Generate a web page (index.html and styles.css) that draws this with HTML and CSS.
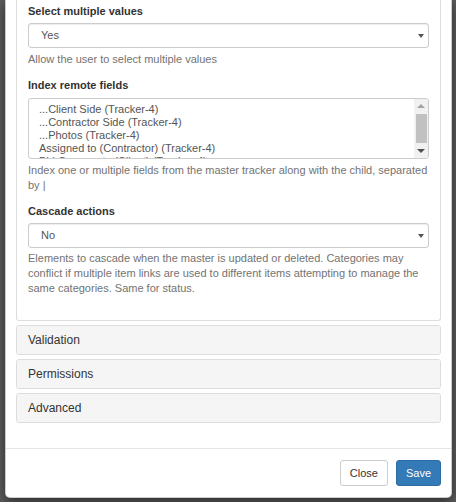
FILE: index.html
```html
<!DOCTYPE html>
<html lang="en">
<head>
  <meta charset="UTF-8">
  <title>Edit field</title>
  <link rel="stylesheet" href="styles.css">
</head>
<body>
  <div class="modal">
    <div class="modal-body">
      <div class="panel panel-open">
        <div class="panel-body">
          <div class="form-group">
            <label>Select multiple values</label>
            <div class="select">
              <span>Yes</span>
              <span class="caret"></span>
            </div>
            <p class="help-block">Allow the user to select multiple values</p>
          </div>

          <div class="form-group">
            <label>Index remote fields</label>
            <div class="listbox">
              <div class="options">
                <div class="option">...Client Side (Tracker-4)</div>
                <div class="option">...Contractor Side (Tracker-4)</div>
                <div class="option">...Photos (Tracker-4)</div>
                <div class="option">Assigned to (Contractor) (Tracker-4)</div>
                <div class="option">Bid Comments (Client) (Tracker-4)</div>
              </div>
              <div class="scrollbar">
                <div class="scroll-btn"><span class="arrow-up"></span></div>
                <div class="thumb"></div>
                <div class="scroll-track"></div>
                <div class="scroll-btn"><span class="arrow-down"></span></div>
              </div>
            </div>
            <p class="help-block">Index one or multiple fields from the master tracker along with the child, separated by |</p>
          </div>

          <div class="form-group">
            <label>Cascade actions</label>
            <div class="select">
              <span>No</span>
              <span class="caret"></span>
            </div>
            <p class="help-block help-tight">Elements to cascade when the master is updated or deleted. Categories may conflict if multiple item links are used to different items attempting to manage the same categories. Same for status.</p>
          </div>
        </div>
      </div>

      <div class="panel"><div class="panel-heading">Validation</div></div>
      <div class="panel"><div class="panel-heading">Permissions</div></div>
      <div class="panel"><div class="panel-heading">Advanced</div></div>
    </div>

    <div class="modal-footer">
      <button class="btn btn-default">Close</button>
      <button class="btn btn-primary">Save</button>
    </div>
  </div>
</body>
</html>
```

FILE: styles.css
```css
html, body {
  margin: 0;
  height: 502px;
  overflow: hidden;
}
body {
  background: #5b5b5b;
  font-family: "Liberation Sans", Arial, sans-serif;
  font-size: 11px;
  line-height: 15px;
  color: #333;
}

.modal {
  width: 447px;
  margin-left: 5px;
  box-sizing: border-box;
  background: #fff;
  border: 1px solid rgba(0, 0, 0, 0.2);
  border-top: none;
  border-radius: 0 0 5px 5px;
  box-shadow: 0 4px 12px rgba(0, 0, 0, 0.5);
}
.modal-body {
  padding: 0 10px 10px;
  display: flex;
  flex-direction: column;
  gap: 4px;
}
.modal-footer {
  border-top: 1px solid #e5e5e5;
  padding: 11px 10px;
  display: flex;
  justify-content: flex-end;
  gap: 8px;
}

/* panels */
.panel {
  border: 1px solid #ddd;
  border-radius: 3px;
  background: #fff;
}
.panel:last-child {
  margin-bottom: 15px;
}
.panel-open {
  border-top: none;
  border-radius: 0 0 3px 3px;
}
.panel-body {
  padding: 4px 11px 13px;
}
.panel-heading {
  background: #f5f5f5;
  padding: 7px 11px;
  font-size: 12px;
  line-height: 14px;
  color: #333;
  border-radius: 3px;
}

/* form */
.form-group {
  margin-bottom: 11px;
}
label {
  display: block;
  font-weight: bold;
  margin-bottom: 4px;
}
.select {
  height: 25px;
  box-sizing: border-box;
  border: 1px solid #ccc;
  border-radius: 3px;
  padding: 0 4px 0 12px;
  display: flex;
  align-items: center;
  justify-content: space-between;
  color: #555;
  box-shadow: inset 0 1px 1px rgba(0, 0, 0, 0.075);
}
.caret {
  width: 0;
  height: 0;
  border-left: 3px solid transparent;
  border-right: 3px solid transparent;
  border-top: 4px solid #555;
}
.help-block {
  margin: 4px 0 0;
  color: #737373;
}
.help-tight {
  margin-top: 3px;
}

.listbox {
  height: 61px;
  margin-top: 5px;
  box-sizing: border-box;
  border: 1px solid #ccc;
  border-radius: 3px;
  display: flex;
  overflow: hidden;
  color: #555;
}
.options {
  flex: 1;
  padding-top: 4px;
  line-height: 13px;
  overflow: hidden;
}
.option {
  padding-left: 10px;
  white-space: nowrap;
}
.scrollbar {
  width: 14px;
  background: #f1f1f1;
  display: flex;
  flex-direction: column;
  align-items: center;
}
.scroll-btn {
  height: 15px;
  width: 14px;
  display: flex;
  align-items: center;
  justify-content: center;
}
.arrow-up {
  border-left: 4px solid transparent;
  border-right: 4px solid transparent;
  border-bottom: 4px solid #a3a3a3;
}
.arrow-down {
  border-left: 4px solid transparent;
  border-right: 4px solid transparent;
  border-top: 4px solid #505050;
}
.thumb {
  width: 11px;
  height: 30px;
  background: #c1c1c1;
}
.scroll-track {
  flex: 1;
}

/* buttons */
.btn {
  font-family: inherit;
  font-size: 11px;
  line-height: 16px;
  padding: 4px 9px;
  border: 1px solid #ccc;
  border-radius: 3px;
  background: #fff;
  color: #333;
  cursor: pointer;
}
.btn-primary {
  background: #337ab7;
  border-color: #2e6da4;
  color: #fff;
}
```
